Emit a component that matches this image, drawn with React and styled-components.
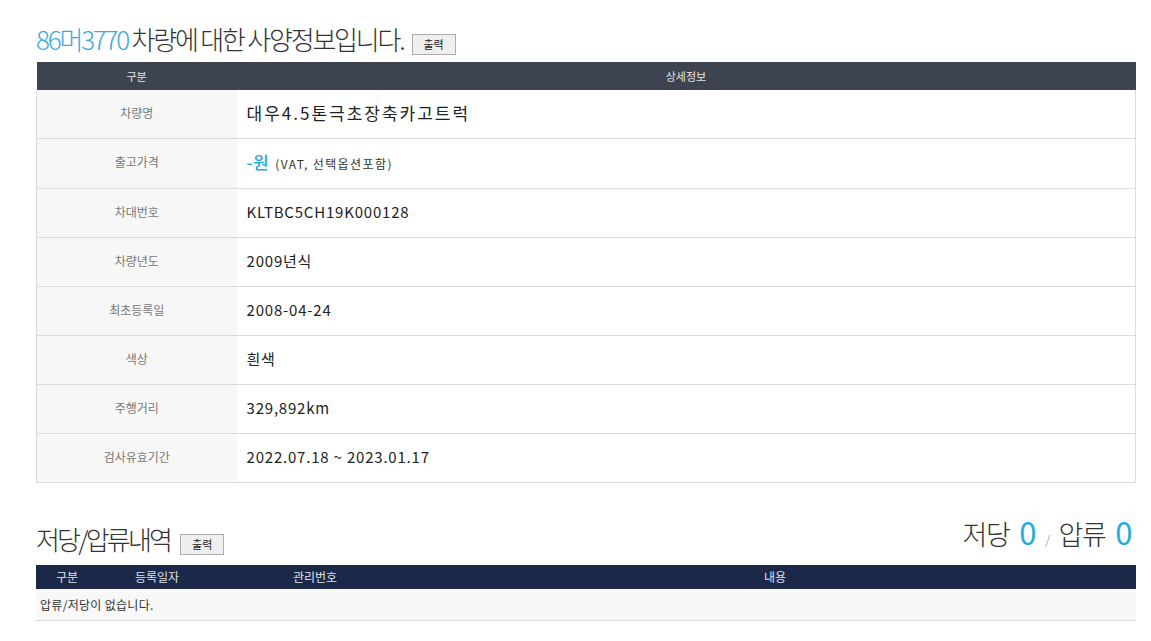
import React from 'react';
import styled, { createGlobalStyle } from 'styled-components';

const GlobalStyle = createGlobalStyle`
  body {
    margin: 0;
    background: #fff;
    font-family: "Noto Sans CJK KR", "Noto Sans", sans-serif;
  }
`;

const Page = styled.div`
  width: 1100px;
  padding: 20px 0 0 36px;
`;

const TitleRow = styled.div`
  display: flex;
  align-items: flex-end;
  justify-content: space-between;
  height: ${(p) => p.h}px;
  margin-top: ${(p) => p.mt || 0}px;
`;

const TitleLeft = styled.div`
  display: flex;
  align-items: flex-end;
`;

const Title = styled.h2`
  margin: 0 0 ${(p) => p.mb || 0}px;
  font-size: 26px;
  font-weight: 300;
  letter-spacing: ${(p) => p.ls || -2.2}px;
  color: #333;
  line-height: 36px;
`;

const Blue = styled.span`
  color: #3aa9df;
`;

const PrintButton = styled.button`
  width: 44px;
  height: 21px;
  margin: 0 0 ${(p) => p.mb || 0}px ${(p) => p.ml || 8}px;
  padding: 0;
  border: 1px solid #adadad;
  background: #efefef;
  font-family: "Noto Sans CJK KR", sans-serif;
  font-size: 11px;
  color: #222;
  line-height: 19px;
`;

const Counter = styled.div`
  font-size: 27px;
  font-weight: 300;
  color: #333;
  letter-spacing: -1.5px;
  line-height: 36px;
  margin: 0 5px 7px 0;
`;

const Slash = styled.span`
  font-size: 13px;
  color: #888;
  margin: 0 10px 0 10px;
`;

const Num = styled.span`
  color: #27a9e1;
  font-size: 31px;
  font-weight: 400;
  margin-left: 10px;
`;

const Table = styled.table`
  width: 1100px;
  border-collapse: collapse;
  table-layout: fixed;
`;

const SpecHead = styled.th`
  height: 28px;
  padding: 0;
  background: #3d4350;
  color: #e6e6e6;
  font-size: 11px;
  font-weight: 400;
  text-align: center;
  width: ${(p) => (p.w ? `${p.w}px` : 'auto')};
`;

const SpecRow = styled.tr`
  height: ${(p) => p.h || 49}px;
  border-bottom: 1px solid #dcdcdc;
`;

const Label = styled.td`
  padding: 0 0 3px;
  background: #f7f7f7;
  border-left: 1px solid #dcdcdc;
  color: #777;
  font-size: 12px;
  text-align: center;
`;

const Value = styled.td`
  padding: 0 0 3px 10px;
  border-right: 1px solid #dcdcdc;
  color: #222;
  font-size: ${(p) => (p.big ? 17 : 15)}px;
  letter-spacing: ${(p) => (p.big ? 2 : 0.8)}px;
`;

const Price = styled.span`
  color: #27a9e1;
  font-size: 17px;
  font-weight: 500;
  letter-spacing: 0.5px;
`;

const Note = styled.span`
  font-size: 12px;
  color: #333;
  margin-left: 6px;
  letter-spacing: 1.4px;
`;

const NavyHead = styled.th`
  height: 24px;
  padding: 0;
  background: #1b2848;
  color: #dfe3ec;
  font-size: 12px;
  font-weight: 400;
  text-align: center;
  width: ${(p) => (p.w ? `${p.w}px` : 'auto')};
`;

const EmptyCell = styled.td`
  height: 31px;
  padding: 0 0 0 4px;
  background: #f8f8f8;
  border-bottom: 1px solid #dcdcdc;
  color: #333;
  font-size: 12px;
  letter-spacing: 0.3px;
`;

const specs = [
  ['차량명', '대우4.5톤극초장축카고트럭', 48, true],
  ['출고가격', null, 50],
  ['차대번호', 'KLTBC5CH19K000128'],
  ['차량년도', '2009년식'],
  ['최초등록일', '2008-04-24'],
  ['색상', '흰색'],
  ['주행거리', '329,892km'],
  ['검사유효기간', '2022.07.18 ~ 2023.01.17'],
];

export default function App() {
  return (
    <Page>
      <GlobalStyle />
      <TitleRow h={42}>
        <TitleLeft>
          <Title mb={5}>
            <Blue>86머3770</Blue> 차량에 대한 사양정보입니다.
          </Title>
          <PrintButton mb={7}>출력</PrintButton>
        </TitleLeft>
      </TitleRow>
      <Table>
        <thead>
          <tr>
            <SpecHead w={200}>구분</SpecHead>
            <SpecHead>상세정보</SpecHead>
          </tr>
        </thead>
        <tbody>
          {specs.map(([label, value, h, big]) => (
            <SpecRow key={label} h={h}>
              <Label>{label}</Label>
              <Value big={big}>
                {value === null ? (
                  <>
                    <Price>-원</Price>
                    <Note>(VAT, 선택옵션포함)</Note>
                  </>
                ) : (
                  value
                )}
              </Value>
            </SpecRow>
          ))}
        </tbody>
      </Table>

      <TitleRow h={44} mt={38}>
        <TitleLeft>
          <Title mb={8} ls={-2.8}>저당/압류내역</Title>
          <PrintButton mb={10} ml={10}>출력</PrintButton>
        </TitleLeft>
        <Counter>
          저당<Num>0</Num>
          <Slash>/</Slash>
          압류<Num>0</Num>
        </Counter>
      </TitleRow>
      <Table>
        <thead>
          <tr>
            <NavyHead w={62}>구분</NavyHead>
            <NavyHead w={118}>등록일자</NavyHead>
            <NavyHead w={198}>관리번호</NavyHead>
            <NavyHead>내용</NavyHead>
          </tr>
        </thead>
        <tbody>
          <tr>
            <EmptyCell colSpan={4}>압류/저당이 없습니다.</EmptyCell>
          </tr>
        </tbody>
      </Table>
    </Page>
  );
}
